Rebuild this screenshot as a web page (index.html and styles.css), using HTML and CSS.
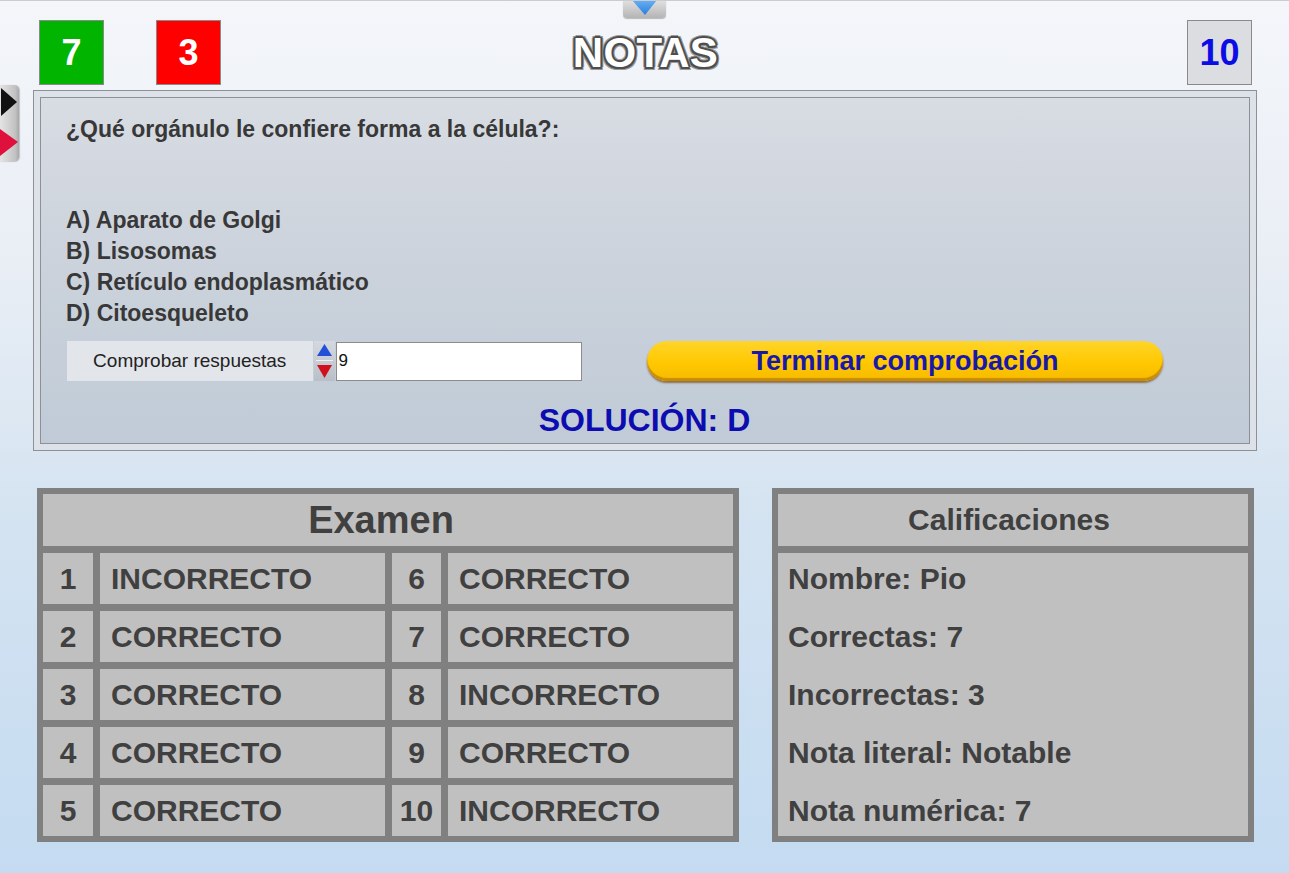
FILE: index.html
```html
<!DOCTYPE html>
<html lang="es">
<head>
  <meta charset="UTF-8">
  <meta name="viewport" content="width=device-width, initial-scale=1.0">
  <title>Notas</title>
  <link rel="stylesheet" href="styles.css">
</head>
<body>
  <div class="top-tab">
    <svg width="43" height="17" viewBox="0 0 43 17">
      <defs>
        <linearGradient id="blueDown" x1="0" y1="0" x2="0" y2="1">
          <stop offset="0" stop-color="#6ab0f4"/>
          <stop offset="1" stop-color="#2a7fdc"/>
        </linearGradient>
      </defs>
      <polygon points="9,0 34,0 22,15" fill="url(#blueDown)"/>
    </svg>
  </div>

  <div class="side-tab">
    <svg width="18" height="76" viewBox="0 0 18 76">
      <polygon points="1,3 17,17 1,31" fill="#111"/>
      <polygon points="0,44 18,57 0,71" fill="#e0103c"/>
    </svg>
  </div>

  <header class="header">
    <div class="scores">
      <div class="score score-ok">7</div>
      <div class="score score-bad">3</div>
    </div>
    <h1 class="title">NOTAS</h1>
    <div class="score score-total">10</div>
  </header>

  <section class="panel">
    <div class="panel-inner">
      <p class="question">¿Qué orgánulo le confiere forma a la célula?:</p>
      <ul class="options">
        <li>A) Aparato de Golgi</li>
        <li>B) Lisosomas</li>
        <li>C) Retículo endoplasmático</li>
        <li>D) Citoesqueleto</li>
      </ul>
      <div class="controls">
        <div class="check">
          <span class="check-label">Comprobar respuestas</span>
          <span class="spinner">
            <svg width="21" height="40" viewBox="0 0 21 40">
              <polygon points="10.5,3 18,15 3,15" fill="#2350d8"/>
              <line x1="2" y1="19.5" x2="19" y2="19.5" stroke="#eef0f3" stroke-width="1"/>
              <polygon points="3,24 18,24 10.5,37" fill="#d0101c"/>
            </svg>
          </span>
          <input class="check-input" type="text" value="9">
        </div>
        <button class="finish">Terminar comprobación</button>
      </div>
      <p class="solution">SOLUCIÓN: D</p>
    </div>
  </section>

  <main class="results">
    <div class="exam">
      <div class="exam-head">Examen</div>
      <div class="cell num">1</div><div class="cell">INCORRECTO</div>
      <div class="cell num">6</div><div class="cell">CORRECTO</div>
      <div class="cell num">2</div><div class="cell">CORRECTO</div>
      <div class="cell num">7</div><div class="cell">CORRECTO</div>
      <div class="cell num">3</div><div class="cell">CORRECTO</div>
      <div class="cell num">8</div><div class="cell">INCORRECTO</div>
      <div class="cell num">4</div><div class="cell">CORRECTO</div>
      <div class="cell num">9</div><div class="cell">CORRECTO</div>
      <div class="cell num">5</div><div class="cell">CORRECTO</div>
      <div class="cell num">10</div><div class="cell">INCORRECTO</div>
    </div>

    <div class="grades">
      <div class="grades-head">Calificaciones</div>
      <div class="grades-body">
        <div class="grade">Nombre: Pio</div>
        <div class="grade">Correctas: 7</div>
        <div class="grade">Incorrectas: 3</div>
        <div class="grade">Nota literal: Notable</div>
        <div class="grade">Nota numérica: 7</div>
      </div>
    </div>
  </main>
</body>
</html>
```

FILE: styles.css
```css
* {
  box-sizing: border-box;
}

body {
  margin: 0;
  min-height: 873px;
  border-top: 1px solid #c9cdd2;
  font-family: 'Liberation Sans', Arial, sans-serif;
  background: linear-gradient(180deg, #f4f6fa 0%, #e9eef5 30%, #d4e3f1 60%, #c4dbf1 100%);
  position: relative;
}

/* little tabs on the edges */
.top-tab {
  position: absolute;
  top: -1px;
  left: 623px;
  width: 43px;
  height: 18px;
  background: linear-gradient(180deg, #e2e2e2, #b4b4b4);
  border-radius: 0 0 4px 4px;
  box-shadow: 0 1px 1px rgba(0, 0, 0, 0.25);
}

.top-tab svg {
  display: block;
}

.side-tab {
  position: absolute;
  top: 84px;
  left: 0;
  width: 19px;
  height: 77px;
  background: linear-gradient(90deg, #e4e4e4, #c2c2c2 80%, #a8a8a8);
  border-radius: 0 5px 5px 0;
  box-shadow: 1px 0 1px rgba(0, 0, 0, 0.2);
}

.side-tab svg {
  display: block;
}

/* header */
.header {
  display: grid;
  grid-template-columns: 1fr auto 1fr;
  align-items: center;
  height: 84px;
  padding: 19px 37px 0 39px;
}

.scores {
  display: flex;
  gap: 52px;
}

.score {
  width: 65px;
  height: 65px;
  border: 1px solid #8a8a8a;
  display: flex;
  align-items: center;
  justify-content: center;
  font-size: 36px;
  font-weight: bold;
  color: #fff;
}

.score-ok {
  background: #00b400;
}

.score-bad {
  background: #ff0000;
}

.score-total {
  justify-self: end;
  background: #dcdde0;
  color: #0c0ce6;
}

.title {
  margin: 0;
  font-size: 42px;
  font-weight: bold;
  color: #fff;
  letter-spacing: 0.3px;
  text-shadow:
    2px 0 #4e4e4e, -2px 0 #4e4e4e, 0 2px #4e4e4e, 0 -2px #4e4e4e,
    1.5px 1.5px #4e4e4e, -1.5px 1.5px #4e4e4e, 1.5px -1.5px #4e4e4e, -1.5px -1.5px #4e4e4e,
    3px 0 #9a9a9a, -3px 0 #9a9a9a, 0 3px #9a9a9a, 0 -3px #9a9a9a,
    2.5px 2.5px #9a9a9a, -2.5px 2.5px #9a9a9a, 2.5px -2.5px #9a9a9a, -2.5px -2.5px #9a9a9a;
}

/* question panel */
.panel {
  margin: 5px 32px 0 33px;
  padding: 6px;
  border: 1px solid #8d9197;
  background: #dde2e9;
}

.panel-inner {
  border: 1px solid #8d9197;
  background: linear-gradient(180deg, #d8dce3 0%, #cbd2db 50%, #c0cbd7 100%);
  padding: 16px 26px 4px 25px;
  color: #383838;
}

.question {
  margin: 0;
  font-size: 23px;
  font-weight: bold;
  line-height: 31px;
}

.options {
  list-style: none;
  margin: 60px 0 0;
  padding: 0;
}

.options li {
  font-size: 23px;
  font-weight: bold;
  line-height: 31px;
}

.controls {
  display: flex;
  align-items: center;
  margin-top: 12px;
  height: 40px;
  padding-left: 1px;
}

.check {
  display: flex;
  align-items: center;
  width: 515px;
}

.check-label {
  width: 246px;
  height: 40px;
  display: flex;
  align-items: center;
  justify-content: center;
  background: #e2e5ea;
  font-size: 19px;
  color: #222;
}

.spinner {
  margin-left: 1px;
  width: 21px;
  height: 40px;
  background: linear-gradient(180deg, #d5d9df, #b9bfc7);
}

.spinner svg {
  display: block;
}

.check-input {
  margin-left: 1px;
  width: 247px;
  height: 39px;
  border: 1px solid #8c8c8c;
  background: #fff;
  padding: 0 2px;
  font-family: 'Liberation Sans', Arial, sans-serif;
  font-size: 17px;
  color: #111;
}

.finish {
  margin-left: 65px;
  width: 516px;
  height: 40px;
  border: none;
  border-radius: 20px;
  background: linear-gradient(180deg, #ffd52a 0%, #ffc800 55%, #f6ba00 100%);
  box-shadow: inset 0 -3px 1px #c98c00, 0 2px 2px rgba(110, 60, 0, 0.65);
  font-family: 'Liberation Sans', Arial, sans-serif;
  font-size: 27px;
  font-weight: bold;
  color: #1818aa;
  padding: 0;
  cursor: pointer;
}

.solution {
  margin: 20px 0 0;
  text-align: center;
  font-size: 32px;
  font-weight: bold;
  line-height: 38px;
  color: #0c0cb0;
}

/* results */
.results {
  display: flex;
  gap: 33px;
  padding: 37px 35px 0 37px;
}

.exam {
  width: 702px;
  display: grid;
  grid-template-columns: 50px 1fr 49px 1fr;
  grid-template-rows: 52px repeat(5, 51px);
  gap: 7px;
  padding: 6px;
  background: #808080;
  color: #404040;
}

.exam-head {
  grid-column: 1 / -1;
  background: #c0c0c0;
  display: flex;
  align-items: center;
  justify-content: center;
  padding-right: 14px;
  font-size: 38px;
  font-weight: bold;
}

.cell {
  background: #c0c0c0;
  display: flex;
  align-items: center;
  padding-left: 11px;
  font-size: 30px;
  font-weight: bold;
}

.cell.num {
  justify-content: center;
  padding-left: 0;
}

.grades {
  width: 482px;
  display: flex;
  flex-direction: column;
  gap: 7px;
  padding: 6px;
  background: #808080;
  color: #404040;
}

.grades-head {
  height: 52px;
  background: #c0c0c0;
  display: flex;
  align-items: center;
  justify-content: center;
  padding-right: 8px;
  font-size: 30px;
  font-weight: bold;
}

.grades-body {
  flex: 1;
  background: #c0c0c0;
  display: grid;
  grid-template-rows: repeat(5, 51px);
  row-gap: 7px;
}

.grade {
  display: flex;
  align-items: center;
  padding-left: 10px;
  font-size: 30px;
  font-weight: bold;
}
```
